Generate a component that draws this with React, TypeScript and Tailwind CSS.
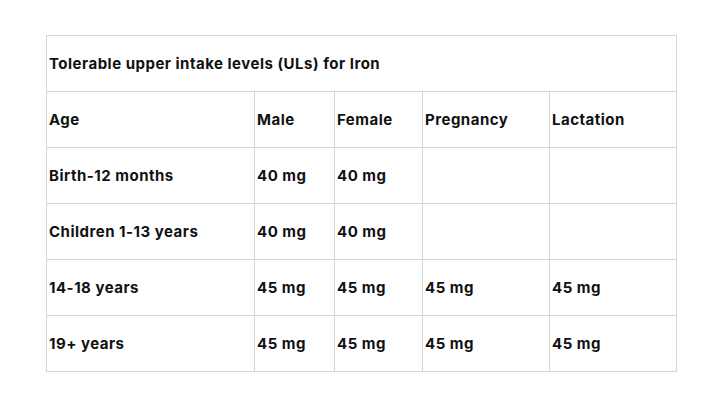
import React from "react";

const rows = [
  ["Birth-12 months", "40 mg", "40 mg", "", ""],
  ["Children 1-13 years", "40 mg", "40 mg", "", ""],
  ["14-18 years", "45 mg", "45 mg", "45 mg", "45 mg"],
  ["19+ years", "45 mg", "45 mg", "45 mg", "45 mg"],
];

export default function App() {
  return (
    <div className="w-[720px] h-[406px] bg-white pt-[35px] pl-[46px]" style={{ fontFamily: "Inter, 'Noto Sans', sans-serif" }}>
      <table className="border-collapse table-fixed w-[630px] text-[15px] font-bold text-[#111] tracking-[0.5px]">
        <colgroup>
          <col className="w-[208px]" />
          <col className="w-[80px]" />
          <col className="w-[88px]" />
          <col className="w-[127px]" />
          <col className="w-[127px]" />
        </colgroup>
        <tbody>
          <tr className="h-[56px]">
            <td colSpan={5} className="border-[1.5px] border-[#d6d6d6] pl-[2px] pt-[2px] align-middle">
              Tolerable upper intake levels (ULs) for Iron
            </td>
          </tr>
          <tr className="h-[56px]">
            {["Age", "Male", "Female", "Pregnancy", "Lactation"].map((h, i) => (
              <td key={i} className="border-[1.5px] border-[#d6d6d6] pl-[2px] pt-[2px] align-middle">
                {h}
              </td>
            ))}
          </tr>
          {rows.map((r, ri) => (
            <tr key={ri} className="h-[56px]">
              {r.map((c, ci) => (
                <td key={ci} className="border-[1.5px] border-[#d6d6d6] pl-[2px] pt-[2px] align-middle">
                  {c}
                </td>
              ))}
            </tr>
          ))}
        </tbody>
      </table>
    </div>
  );
}
